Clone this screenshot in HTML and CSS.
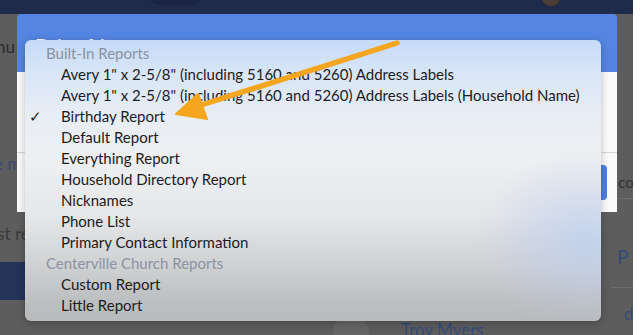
FILE: index.html
```html
<!DOCTYPE html>
<html>
<head>
<meta charset="utf-8">
<link rel="stylesheet" href="styles.css">
</head>
<body>
<div class="screen">
  <div class="topbar">
    <div class="bump"></div>
    <div class="avatar-top"></div>
  </div>
  <div class="under">
    <div class="left-col">
      <div class="frag frag-nu">nu</div>
      <div class="frag frag-em">e m</div>
      <div class="frag frag-ist">ist re</div>
      <div class="navy-block"></div>
    </div>
    <div class="mid-col">
      <div class="bottom-row">
        <div class="person-avatar"></div>
        <div class="person-name">Troy Myers</div>
      </div>
    </div>
    <div class="right-col">
      <div class="frag frag-tco">t co</div>
      <div class="rline"></div>
      <div class="frag frag-p">P</div>
      <div class="rline rline2"></div>
      <div class="frag frag-da">da</div>
    </div>
    <div class="edge"></div>
  </div>

  <div class="dialog">
    <div class="dialog-head">Print List</div>
    <div class="dialog-body">
      <div class="dialog-footer">
        <div class="btn"></div>
      </div>
    </div>
  </div>

  <div class="menu">
    <div class="mi header">Built-In Reports</div>
    <div class="mi">Avery 1" x 2-5/8" (including 5160 and 5260) Address Labels</div>
    <div class="mi">Avery 1" x 2-5/8" (including 5160 and 5260) Address Labels (Household Name)</div>
    <div class="mi checked"><span class="check">✓</span>Birthday Report</div>
    <div class="mi">Default Report</div>
    <div class="mi">Everything Report</div>
    <div class="mi">Household Directory Report</div>
    <div class="mi">Nicknames</div>
    <div class="mi">Phone List</div>
    <div class="mi">Primary Contact Information</div>
    <div class="mi header">Centerville Church Reports</div>
    <div class="mi">Custom Report</div>
    <div class="mi">Little Report</div>
  </div>

  <svg class="arrow" width="643" height="335" viewBox="0 0 643 335">
    <line x1="397" y1="43" x2="198" y2="106" stroke="#f5a51e" stroke-width="5.5" stroke-linecap="round"/>
    <polygon points="176,114 198,94 207,119" fill="#f5a51e" stroke="#f5a51e" stroke-width="2" stroke-linejoin="round"/>
  </svg>
</div>
</body>
</html>
```

FILE: styles.css
```css
* { box-sizing: border-box; }
html, body { margin: 0; padding: 0; }
body {
  width: 643px;
  height: 335px;
  overflow: hidden;
  font-family: Lato, "Open Sans", sans-serif;
  background: #fff;
}
.screen {
  position: relative;
  width: 643px;
  height: 335px;
  overflow: hidden;
  background: #5d5d5e;
  display: flex;
  flex-direction: column;
}
.topbar {
  height: 14px;
  flex: none;
  background: #1f2b4b;
  position: relative;
}
.bump {
  position: absolute;
  left: 150px;
  top: -6px;
  width: 50px;
  height: 12px;
  border-radius: 50%;
  background: #1a2442;
}
.avatar-top {
  position: absolute;
  left: 542px;
  top: -10px;
  width: 18px;
  height: 16px;
  border-radius: 50%;
  background: #4a3e36;
}
.under {
  flex: 1;
  display: flex;
}
.left-col {
  width: 25px;
  display: flex;
  flex-direction: column;
  overflow: hidden;
  white-space: nowrap;
}
.frag {
  font-size: 17px;
  line-height: 20px;
  white-space: nowrap;
}
.frag-nu { color: #2c2c2d; margin-top: 23px; margin-left: -4px; }
.frag-em { color: #3a4870; margin-top: 97px; margin-left: -6px; }
.frag-ist { color: #3a3a3b; margin-top: 50px; margin-left: -7px; }
.navy-block {
  margin-top: 18px;
  height: 38px;
  background: #243358;
}
.mid-col {
  flex: 1;
  display: flex;
  flex-direction: column;
  justify-content: flex-end;
}
.bottom-row {
  display: flex;
  align-items: flex-end;
  gap: 32px;
  padding-left: 308px;
}
.person-avatar {
  width: 36px;
  height: 20px;
  border-radius: 18px 18px 0 0;
  background: #666667;
}
.person-name {
  color: #364a78;
  font-size: 17px;
  line-height: 18px;
  margin-bottom: -4px;
}
.right-col {
  width: 32px;
  display: flex;
  flex-direction: column;
  overflow: hidden;
}
.frag-tco { color: #2e2e2f; margin-top: 158px; margin-left: -2px; font-size: 15px; }
.rline { height: 1px; background: #6c6c6d; margin-top: 6px; }
.frag-p { color: #364a78; margin-top: 48px; margin-left: 6px; font-size: 19px; }
.rline2 { margin-top: 20px; }
.frag-da { color: #3a4a70; margin-top: 16px; margin-left: 13px; font-size: 17px; }
.edge {
  position: absolute;
  right: 0;
  top: 0;
  width: 10px;
  height: 335px;
  background: #ffffff;
}

.dialog {
  position: absolute;
  left: 17px;
  top: 14px;
  width: 600px;
  height: 198px;
  display: flex;
  flex-direction: column;
  border-radius: 4px 4px 0 0;
  overflow: hidden;
}
.dialog-head {
  height: 58px;
  background: #5585e2;
  color: #fff;
  font-size: 22px;
  font-weight: 700;
  padding: 20px 0 0 18px;
}
.dialog-body {
  flex: 1;
  background: #fbfbfb;
  display: flex;
  flex-direction: column;
  justify-content: flex-end;
}
.dialog-footer {
  height: 60px;
  border-top: 1px solid #d8d8d8;
  display: flex;
  justify-content: flex-end;
  align-items: flex-start;
  padding-top: 12px;
  padding-right: 10px;
}
.btn {
  width: 40px;
  height: 35px;
  border-radius: 4px;
  background: #4e7fe0;
}

.menu {
  position: absolute;
  left: 25px;
  top: 40px;
  width: 576px;
  height: 281px;
  border-radius: 6px;
  padding-top: 3px;
  box-shadow: 0 2px 8px rgba(0,0,0,0.25);
  background:
    radial-gradient(ellipse 110px 90px at 560px 200px, rgba(185,205,240,0.7), rgba(185,205,240,0) 100%),
    linear-gradient(to bottom, #c6dbf8 0px, #d9e6f6 35px, #e9eef5 80px, #eeeff1 120px, #e6e7e9 175px, #d0d1d3 225px, #bebfc1 260px, #b9babb 281px);
}
.mi {
  position: relative;
  height: 21px;
  line-height: 21px;
  font-size: 15px;
  color: #1c1c1e;
  padding-left: 36px;
  white-space: nowrap;
}
.mi.header {
  padding-left: 21px;
  color: #8b93a0;
}
.check {
  position: absolute;
  left: 4px;
  top: 0;
  font-size: 15px;
  color: #1c1c1e;
}
.arrow {
  position: absolute;
  left: 0;
  top: 0;
  pointer-events: none;
}
```
